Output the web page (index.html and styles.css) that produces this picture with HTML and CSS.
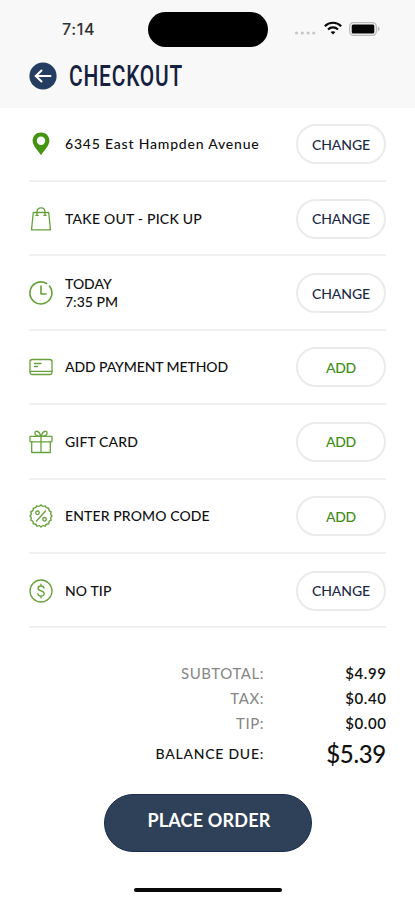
FILE: index.html
```html
<!DOCTYPE html>
<html lang="en">
<head>
<meta charset="utf-8">
<title>Checkout</title>
<link rel="stylesheet" href="styles.css">
</head>
<body>
<header class="header">
  <div class="status">
    <span class="time">7:14</span>
    <span class="island"></span>
    <span class="indicators">
      <svg class="signal" width="22" height="6" viewBox="0 0 22 6"><g fill="#c6c6c6"><circle cx="2.500" cy="3" r="1.600"/><circle cx="8.300" cy="3" r="1.600"/><circle cx="14.100" cy="3" r="1.600"/><circle cx="19.800" cy="3" r="1.600"/></g></svg>
      <svg class="wifi" width="18" height="14" viewBox="0 0 18 14"><g fill="none" stroke="#080808" stroke-width="2.100"><path d="M.8 5.200C5.400.6 12.600.6 17.200 5.200"/><path d="M4 8.500c2.800-2.800 7.200-2.800 10 0"/></g><path d="M6.600 11.100c1.400-1.200 3.400-1.200 4.800 0L9 13.600z" fill="#080808"/></svg>
      <svg class="battery" width="32" height="14" viewBox="0 0 32 14"><rect x=".7" y=".7" width="26.600" height="12.600" rx="3.700" fill="#f8f8f8" stroke="#b9b9b9" stroke-width="1.200"/><rect x="2.700" y="2.500" width="22.600" height="9" rx="1.500" fill="#050505"/><path d="M28.700 4.600c2.600.7 2.600 4.100 0 4.800z" fill="#b9b9b9"/></svg>
    </span>
  </div>
  <div class="titlebar">
    <svg class="back" width="28" height="28" viewBox="0 0 28 28"><circle cx="14" cy="14" r="13.600" fill="#243d60"/><path d="M21.500 14H6.500M12.500 8.500L6.800 14l5.700 5.500" fill="none" stroke="#fff" stroke-width="2" stroke-linecap="round" stroke-linejoin="round"/></svg>
    <h1 class="title">CHECKOUT</h1>
  </div>
</header>

<main class="rows">
  <section class="row">
    <svg class="icon" viewBox="0 0 24 24"><path fill="#459411" fill-rule="evenodd" d="M12 .5C7.200.5 3.600 4 3.600 8.600c0 5.200 5.200 9.800 8.400 14.600 3.200-4.800 8.400-9.400 8.400-14.600C20.400 4 16.800.5 12 .5zm0 4a4.200 4.200 0 1 1 0 8.400 4.200 4.200 0 0 1 0-8.400z"/></svg>
    <span class="label address">6345 East Hampden Avenue</span>
    <button class="pill">CHANGE</button>
  </section>
  <section class="row">
    <svg class="icon line" viewBox="0 0 24 24"><path d="M4.300 5.500h15.400l1.800 17.400h-19z"/><path d="M8 8.500V5c0-5.600 8-5.600 8 0v3.500"/><path d="M6.800 8.300h2.400M14.800 8.300h2.400"/></svg>
    <span class="label takeout">TAKE OUT - PICK UP</span>
    <button class="pill">CHANGE</button>
  </section>
  <section class="row">
    <svg class="icon line clock" viewBox="0 0 24 24"><path d="M20.500 5.100A11 11 0 1 1 17.500 2.500"/><path d="M12 5v8h5"/></svg>
    <span class="label when">TODAY<br>7:35 PM</span>
    <button class="pill">CHANGE</button>
  </section>
  <section class="row">
    <svg class="icon line" viewBox="0 0 24 24"><rect x="1" y="4.500" width="22" height="15" rx="2.200"/><path d="M1 16.300h22M5.500 8.500h6.500M5.500 11.500h3"/></svg>
    <span class="label payment">ADD PAYMENT METHOD</span>
    <button class="pill add">ADD</button>
  </section>
  <section class="row">
    <svg class="icon line" viewBox="0 0 24 24"><rect x="1" y="6.300" width="22" height="5.500" rx=".5"/><path d="M2.700 11.800v10.700h18.600V11.800M12 6.300v16.200"/><path d="M12 6.300C9.500-.5 5.500.5 6 3.600c.3 1.900 3 2.700 6 2.700C14.500-.5 18.500.5 18 3.600c-.3 1.900-3 2.700-6 2.700z"/></svg>
    <span class="label gift">GIFT CARD</span>
    <button class="pill add">ADD</button>
  </section>
  <section class="row">
    <svg class="icon line" viewBox="0 0 24 24"><path d="M12 .9Q13.400 3.300 16.200 1.700Q16.700 4.500 19.800 4.200Q19.400 7.100 22.300 7.800Q20.700 10.200 23.100 12Q20.700 13.800 22.300 16.200Q19.400 16.900 19.800 19.800Q16.700 19.500 16.200 22.300Q13.400 20.700 12 23.100Q10.600 20.700 7.800 22.300Q7.300 19.500 4.200 19.800Q4.600 16.900 1.700 16.200Q3.300 13.800.9 12Q3.300 10.200 1.700 7.800Q4.600 7.100 4.200 4.200Q7.300 4.500 7.800 1.700Q10.600 3.300 12 .9z"/><path d="M16.500 7l-9 10"/><circle cx="8.500" cy="8.800" r="1.800"/><circle cx="15.500" cy="15.300" r="1.800"/></svg>
    <span class="label promo">ENTER PROMO CODE</span>
    <button class="pill add">ADD</button>
  </section>
  <section class="row">
    <svg class="icon line" viewBox="0 0 24 24"><circle cx="12" cy="12" r="11"/><path d="M15 9.200c-.4-3-6-2.900-6 .1 0 3.400 6.200 1.800 6.200 5.300 0 3.300-6 3.400-6.400.1M12 5.200v1.700M12 17.200v1.700"/></svg>
    <span class="label tip">NO TIP</span>
    <button class="pill">CHANGE</button>
  </section>
</main>

<section class="totals">
  <span class="name">SUBTOTAL:</span><span class="amount">$4.99</span>
  <span class="name">TAX:</span><span class="amount">$0.40</span>
  <span class="name">TIP:</span><span class="amount">$0.00</span>
  <span class="name due">BALANCE DUE:</span><span class="amount grand">$5.39</span>
</section>

<footer class="footer">
  <button class="order">PLACE ORDER</button>
  <span class="home"></span>
</footer>
</body>
</html>
```
FILE: styles.css
```css
* { box-sizing: border-box; }
body {
  margin: 0;
  width: 415px;
  height: 900px;
  overflow: hidden;
  background: #fff;
  color: #111;
  font-family: Lato, "Liberation Sans", sans-serif;
}
button { font-family: inherit; padding: 0; }
.header { height: 107.6px; background: #f8f8f8; }
.status {
  height: 58px;
  display: grid;
  grid-template-columns: 148px 120px 1fr;
  align-items: center;
}
.time {
  padding-left: 62px;
  font: 500 16px/20px Inter, sans-serif;
  letter-spacing: 0.6px;
  color: #303030;
}
.island { height: 35px; border-radius: 18px; background: #000; }
.indicators { display: flex; align-items: center; padding-left: 26px; }
.signal { margin-top: 8px; }
.wifi { margin-left: 8px; margin-top: -2px; }
.battery { margin-left: 7px; margin-top: -1px; }
.titlebar { display: flex; align-items: center; height: 36px; padding-left: 29px; }
.title {
  margin: 0 0 0 12px;
  font: 500 30px/36px Roboto, sans-serif;
  letter-spacing: 1.2px;
  color: #14213f;
  transform: scaleX(0.695);
  transform-origin: left;
}
.rows { padding: 0 29px; }
.row {
  display: flex;
  align-items: center;
  height: 74.4px;
  padding-top: 1px;
  border-bottom: 2px solid #f0f0f0;
}
.icon { width: 24px; height: 24px; flex: none; }
.line {
  fill: none;
  stroke: #67a13b;
  stroke-width: 1.3;
  stroke-linejoin: round;
  stroke-linecap: round;
}
.clock { stroke-width: 1.6; }
.label {
  flex: 1;
  margin-left: 12px;
  font-size: 14px;
  line-height: 18px;
  font-weight: 500;
  white-space: nowrap;
}
.address { letter-spacing: 0.8px; }
.takeout { letter-spacing: 0.22px; }
.payment { letter-spacing: -0.1px; }
.gift, .promo, .tip { letter-spacing: 0.12px; }
.pill {
  width: 90px;
  height: 40px;
  border: 2px solid #ebebed;
  border-radius: 20px;
  background: #fff;
  color: #1c2946;
  font-size: 14px;
  font-weight: 500;
  letter-spacing: -0.1px;
}
.add { color: #3f8c16; letter-spacing: -0.3px; }
.totals {
  display: grid;
  grid-template-columns: 264px 1fr;
  grid-template-rows: 25px 25px 25px 36px;
  align-items: center;
  padding: 32.4px 29px 0 0;
  text-align: right;
  white-space: nowrap;
}
.name { font-size: 15px; letter-spacing: 0.55px; color: #858585; }
.amount { font-size: 15px; font-weight: 600; letter-spacing: 0.6px; margin-right: -0.6px; }
.due { font-size: 14px; color: #111; font-weight: 500; letter-spacing: 0.75px; }
.grand { font-size: 24px; font-weight: 500; letter-spacing: -0.3px; margin-right: 0; }
.footer { display: flex; flex-direction: column; align-items: center; padding-top: 22.2px; }
.order {
  width: 208px;
  height: 58px;
  border: 1px solid #1b2b51;
  border-radius: 29px;
  background: #2e4158;
  color: #fff;
  font-size: 18px;
  font-weight: 700;
  letter-spacing: 0.2px;
  padding: 0 0 6px 3px;
}
.home { width: 148px; height: 4px; margin-top: 36px; border-radius: 2px; background: #080808; }
```
